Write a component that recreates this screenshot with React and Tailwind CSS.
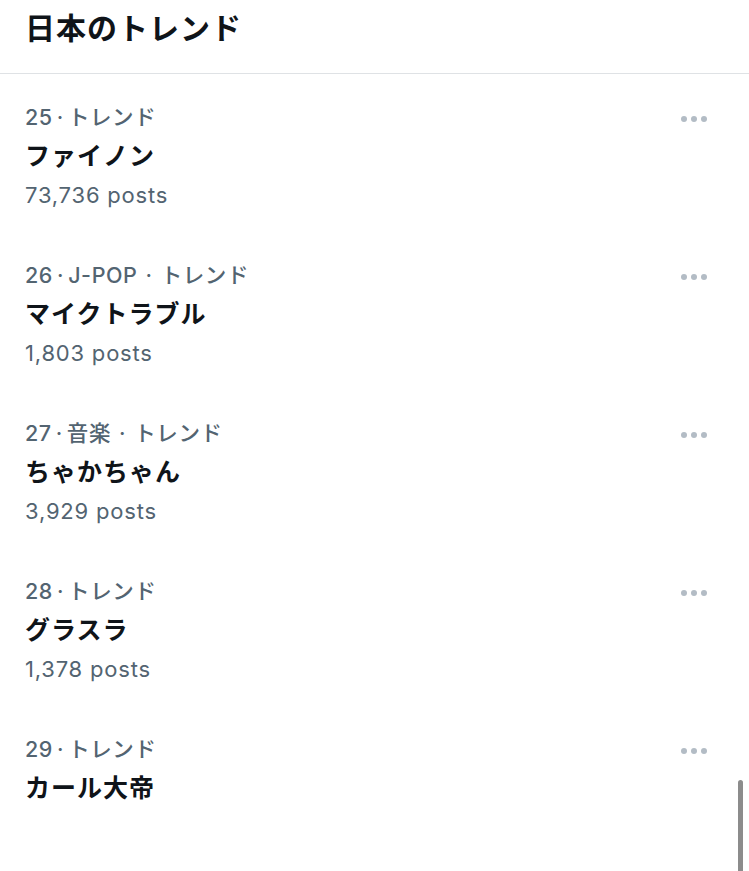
const trends = [
  { rank: 25, meta: ["トレンド"], name: "ファイノン", posts: "73,736 posts" },
  { rank: 26, meta: ["J-POP", "トレンド"], name: "マイクトラブル", posts: "1,803 posts" },
  { rank: 27, meta: ["音楽", "トレンド"], name: "ちゃかちゃん", posts: "3,929 posts" },
  { rank: 28, meta: ["トレンド"], name: "グラスラ", posts: "1,378 posts" },
  { rank: 29, meta: ["トレンド"], name: "カール大帝", posts: null },
];

function Dots() {
  return (
    <div className="flex items-center gap-[4px] pt-[2px]">
      <span className="w-[6px] h-[6px] rounded-full bg-[#b3bcc5]" />
      <span className="w-[6px] h-[6px] rounded-full bg-[#b3bcc5]" />
      <span className="w-[6px] h-[6px] rounded-full bg-[#b3bcc5]" />
    </div>
  );
}

export default function App() {
  return (
    <div
      className="relative w-[749px] h-[871px] overflow-hidden bg-white text-[#0f1419]"
      style={{ fontFamily: 'Inter, "Noto Sans CJK JP", sans-serif' }}
    >
      {/* header */}
      <div className="h-[74px] px-[25px] flex items-start pt-[8px] border-b border-[#dfe2e5]">
        <h1 className="text-[30px] leading-[40px] font-bold tracking-[1px]">日本のトレンド</h1>
      </div>

      {/* trend list */}
      <div>
        {trends.map((t) => (
          <div key={t.rank} className="flex justify-between pl-[25px] pr-[42px] pt-[24px] pb-[17px]">
            <div>
              <p className="h-[39px] leading-[39px] text-[21.5px] font-medium tracking-[0.6px] text-[#536471]">
                {t.rank}
                <span className="mx-[4px]">·</span>
                {t.meta.map((m, i) => (
                  <span key={i}>
                    {i > 0 && <span className="mx-[8px]">·</span>}
                    {m}
                  </span>
                ))}
              </p>
              <p className="h-[39px] leading-[39px] text-[25px] font-bold tracking-[1px]">{t.name}</p>
              {t.posts && (
                <p className="h-[39px] leading-[39px] text-[22px] tracking-[0.8px] text-[#536471]">{t.posts}</p>
              )}
            </div>
            <div className="h-[39px] flex items-center">
              <Dots />
            </div>
          </div>
        ))}
      </div>

      {/* scrollbar */}
      <div className="absolute right-[6px] top-[780px] bottom-[-10px] w-[5px] rounded-full bg-[#8c8c8c]" />
    </div>
  );
}
